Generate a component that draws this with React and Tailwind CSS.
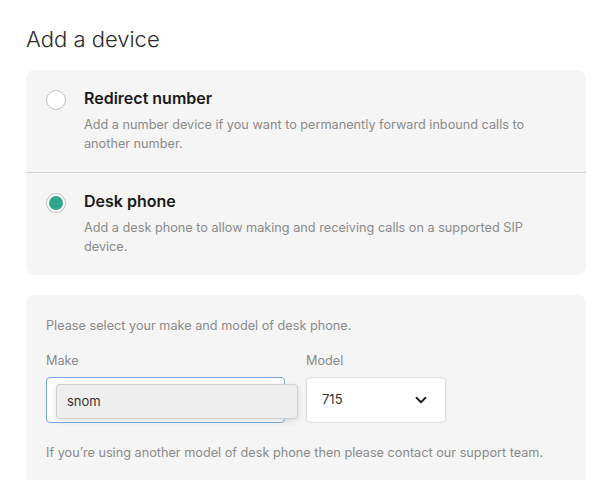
import { ChevronDown } from 'lucide-react';

function DeviceOption({ title, description, checked, last }) {
  return (
    <div className={`flex gap-[18px] px-5 pt-[19px] ${last ? 'pb-[19px]' : 'pb-[19px] border-b border-[#d4d4d4]'}`}>
      <div className="pt-[1px]">
        {checked ? (
          <div className="w-[20px] h-[20px] rounded-full border border-[#bdbdbd] bg-white flex items-center justify-center">
            <div className="w-[14px] h-[14px] rounded-full bg-[#2fa58c]" />
          </div>
        ) : (
          <div className="w-[20px] h-[20px] rounded-full border border-[#bdbdbd] bg-white" />
        )}
      </div>
      <div className="flex-1">
        <div className="text-[16px] leading-[19px] font-semibold text-[#1a1a1a]">{title}</div>
        <p className="mt-[7px] text-[12.7px] leading-[19px] text-[#8a8a8a] pr-8">{description}</p>
      </div>
    </div>
  );
}

export default function App() {
  return (
    <div className="w-[605px] h-[480px] overflow-hidden bg-white pl-[26px] pr-[19px] pt-[26px]" style={{ fontFamily: 'Inter, "Noto Sans", sans-serif' }}>
      <h1 className="text-[22px] leading-[26px] font-light text-[#2a2a2a]">Add a device</h1>

      <div className="mt-[18px] bg-[#f5f5f5] rounded-lg">
        <DeviceOption
          title="Redirect number"
          description="Add a number device if you want to permanently forward inbound calls to another number."
        />
        <DeviceOption
          title="Desk phone"
          description="Add a desk phone to allow making and receiving calls on a supported SIP device."
          checked
          last
        />
      </div>

      <div className="mt-[20px] bg-[#f5f5f5] rounded-t-lg px-5 pt-[21px] pb-8">
        <p className="text-[12.7px] leading-[19px] text-[#8a8a8a]">Please select your make and model of desk phone.</p>

        <div className="mt-[16px] flex gap-[21px]">
          <div className="w-[239px]">
            <div className="text-[12.7px] leading-[19px] text-[#8a8a8a]">Make</div>
            <div className="relative mt-[7px] h-[46px] rounded border border-[#74a6dd] bg-white">
              <div className="absolute left-[9px] top-[6px] w-[242px] h-[35px] bg-[#eeeeee] border border-[#cfcfcf] rounded-sm shadow-[0_2px_6px_rgba(0,0,0,0.12)] flex items-center pl-[10px] text-[13px] text-[#333]">
                snom
              </div>
            </div>
          </div>
          <div className="w-[140px]">
            <div className="text-[12.7px] leading-[19px] text-[#8a8a8a]">Model</div>
            <div className="mt-[7px] h-[46px] rounded border border-[#dcdcdc] bg-white flex items-center justify-between pl-[15px] pr-[15px] text-[13px] text-[#333]">
              <span>715</span>
              <ChevronDown size={18} strokeWidth={2.5} className="text-[#222]" />
            </div>
          </div>
        </div>

        <p className="mt-[20px] text-[12.7px] leading-[19px] text-[#8a8a8a]">If you’re using another model of desk phone then please contact our support team.</p>
      </div>
    </div>
  );
}
